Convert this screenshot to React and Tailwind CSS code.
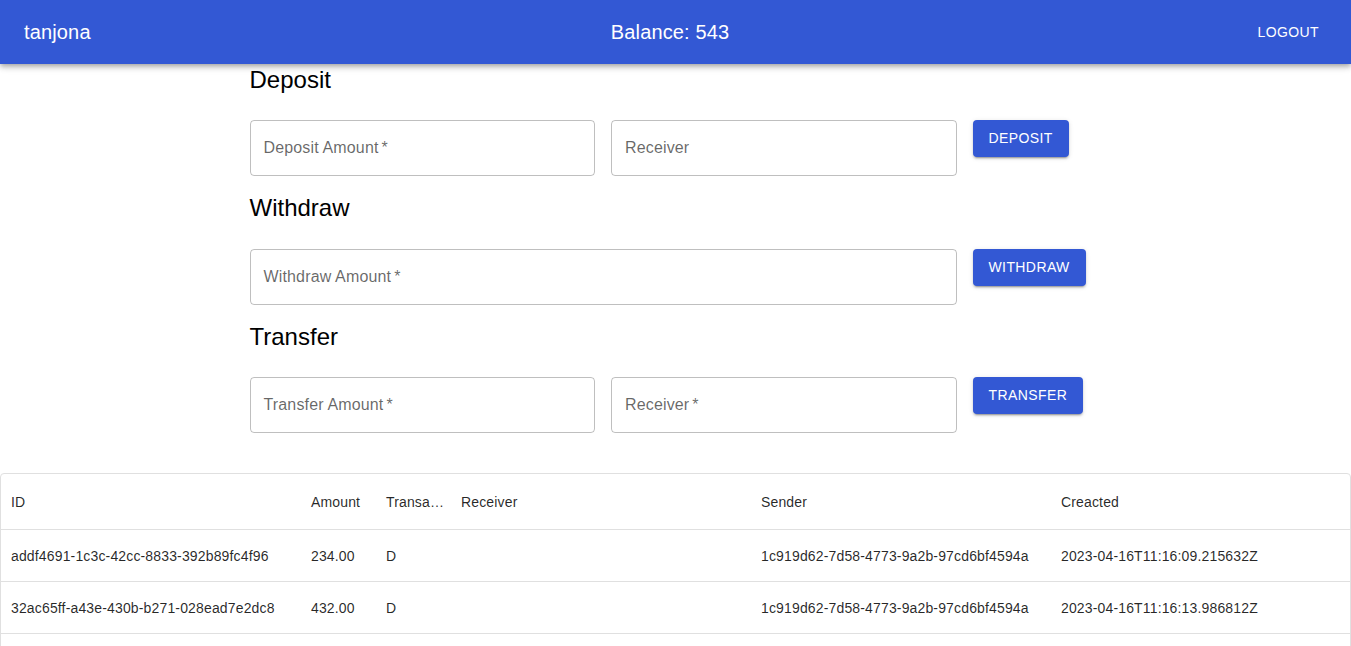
const rows = [
    {
        id: 'addf4691-1c3c-42cc-8833-392b89fc4f96',
        amount: '234.00',
        type: 'D',
        receiver: '',
        sender: '1c919d62-7d58-4773-9a2b-97cd6bf4594a',
        created: '2023-04-16T11:16:09.215632Z',
    },
    {
        id: '32ac65ff-a43e-430b-b271-028ead7e2dc8',
        amount: '432.00',
        type: 'D',
        receiver: '',
        sender: '1c919d62-7d58-4773-9a2b-97cd6bf4594a',
        created: '2023-04-16T11:16:13.986812Z',
    },
    {
        id: '',
        amount: '',
        type: '',
        receiver: '',
        sender: '',
        created: '',
    },
];

const Field = ({ label, required, className = '' }) => (
    <div className={`h-14 border border-black/25 rounded flex items-center px-[13px] ${className}`}>
        <span className="text-base text-black/60 tracking-[0.15px]">
            {label}
            {required && <span className="ml-[3px]">*</span>}
        </span>
    </div>
);

const ActionButton = ({ children }) => (
    <button className="h-[37px] pb-px px-4 rounded bg-[#3358d4] text-white text-sm font-medium uppercase tracking-[0.4px] shadow-[0_3px_1px_-2px_rgba(0,0,0,0.2),0_2px_2px_0_rgba(0,0,0,0.14),0_1px_5px_0_rgba(0,0,0,0.12)]">
        {children}
    </button>
);

const Heading = ({ children }) => (
    <h2 className="text-2xl leading-8 text-black">{children}</h2>
);

const Cell = ({ w, children, className = 'px-[10px]' }) => (
    <div className={`${w} shrink-0 truncate ${className}`}>
        {children}
    </div>
);

const App = () => {
    return (
        <div className="min-h-[646px] bg-white font-['Liberation_Sans',Arial,sans-serif]">
            <header className="h-16 px-6 flex items-center justify-between bg-[#3358d4] text-white shadow-[0_2px_4px_-1px_rgba(0,0,0,0.2),0_4px_5px_0_rgba(0,0,0,0.14),0_1px_10px_0_rgba(0,0,0,0.12)] relative z-10">
                <div className="text-xl tracking-[0.15px]">tanjona</div>
                <div className="text-xl tracking-[0.15px]">Balance: 543</div>
                <button className="px-2 py-1.5 text-sm font-medium uppercase tracking-[0.4px]">Logout</button>
            </header>

            <main className="w-[852px] ml-[249.5px]">
                <Heading>Deposit</Heading>
                <div className="flex gap-4 mt-6">
                    <Field className="w-[345.5px]" label="Deposit Amount" required />
                    <Field className="w-[345.5px]" label="Receiver" />
                    <ActionButton>Deposit</ActionButton>
                </div>

                <div className="mt-4">
                    <Heading>Withdraw</Heading>
                </div>
                <div className="flex gap-4 mt-[24.5px]">
                    <Field className="w-[707px]" label="Withdraw Amount" required />
                    <ActionButton>Withdraw</ActionButton>
                </div>

                <div className="mt-4">
                    <Heading>Transfer</Heading>
                </div>
                <div className="flex gap-4 mt-[24.5px]">
                    <Field className="w-[345.5px]" label="Transfer Amount" required />
                    <Field className="w-[345.5px]" label="Receiver" required />
                    <ActionButton>Transfer</ActionButton>
                </div>
            </main>

            <section className="mt-10 border border-[#e0e0e0] rounded text-sm text-black/85 tracking-[0.15px]">
                <div className="h-[56px] flex items-center border-b border-[#e0e0e0]">
                    <Cell w="w-[300px]">ID</Cell>
                    <Cell w="w-[75px]">Amount</Cell>
                    <Cell w="w-[75px]" className="pl-[10px] pr-[7px]">Transaction</Cell>
                    <Cell w="w-[300px]">Receiver</Cell>
                    <Cell w="w-[300px]">Sender</Cell>
                    <Cell w="w-[300px]">Creacted</Cell>
                </div>
                {rows.map((r, i) => (
                    <div key={i} className="h-[52px] flex items-center border-b border-[#e0e0e0]">
                        <Cell w="w-[300px]">{r.id}</Cell>
                        <Cell w="w-[75px]">{r.amount}</Cell>
                        <Cell w="w-[75px]">{r.type}</Cell>
                        <Cell w="w-[300px]">{r.receiver}</Cell>
                        <Cell w="w-[300px]">{r.sender}</Cell>
                        <Cell w="w-[300px]">{r.created}</Cell>
                    </div>
                ))}
            </section>
        </div>
    );
};

export default App;
